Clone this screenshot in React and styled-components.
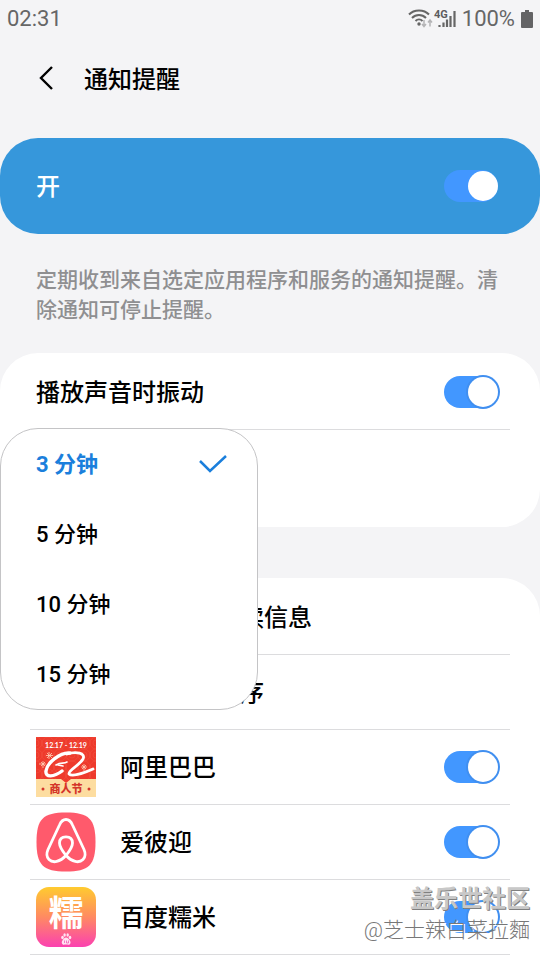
import React, { useState } from 'react'
import styled, { createGlobalStyle } from 'styled-components'

const intervals = ['3 分钟', '5 分钟', '10 分钟', '15 分钟']

function App() {
  const [On, setOn] = useState(true)
  const [Vibrate, setVibrate] = useState(true)
  const [Interval, setInterval] = useState('3 分钟')
  const [Apps, setApps] = useState({ alibaba: true, airbnb: true, nuomi: true })

  const appList = [
    { id: 'alibaba', name: '阿里巴巴', icon: <AlibabaIcon /> },
    { id: 'airbnb', name: '爱彼迎', icon: <AirbnbIcon /> },
    { id: 'nuomi', name: '百度糯米', icon: <NuomiIcon /> }
  ]

  const onAppToggle = (id) => {
    setApps({ ...Apps, [id]: !Apps[id] })
  }

  return (
    <>
      <GlobalStyle />
      <Page>
        <StatusBar>
          <span>02:31</span>
          <StatusIcons>
            <SignalIcon />
            <span>100%</span>
            <BatteryIcon />
          </StatusIcons>
        </StatusBar>

        <Header>
          <BackButton type="button" aria-label="返回">
            <svg width="18" height="28" viewBox="0 0 18 28" fill="none">
              <path d="M16 3 L5 14 L16 25" stroke="#000" strokeWidth="2.4" />
            </svg>
          </BackButton>
          <Title>通知提醒</Title>
        </Header>

        <MainSwitch>
          <MainLabel>开</MainLabel>
          <Switch
            type="checkbox"
            $plain
            checked={On}
            onChange={() => setOn(!On)}
          />
        </MainSwitch>

        <Description>
          定期收到来自选定应用程序和服务的通知提醒。清除通知可停止提醒。
        </Description>

        <Card>
          <Row as="label">
            <RowLabel>播放声音时振动</RowLabel>
            <Switch
              type="checkbox"
              checked={Vibrate}
              onChange={() => setVibrate(!Vibrate)}
            />
          </Row>
          <IntervalArea>
            <Menu role="listbox" aria-label="提醒间隔">
              {intervals.map((item) => (
                <MenuItem
                  key={item}
                  type="button"
                  role="option"
                  aria-selected={item === Interval}
                  $selected={item === Interval}
                  onClick={() => setInterval(item)}
                >
                  <MenuText>{item}</MenuText>
                  {item === Interval && <CheckIcon />}
                </MenuItem>
              ))}
            </Menu>
          </IntervalArea>
        </Card>

        <AppsCard>
          <Row>
            <RowLabel>未接来电提醒 和 未读信息</RowLabel>
          </Row>
          <Row>
            <RowLabel>选择 已安装 应用程序</RowLabel>
          </Row>
          {appList.map((app) => (
            <Row as="label" key={app.id}>
              {app.icon}
              <RowLabel>{app.name}</RowLabel>
              <Switch
                type="checkbox"
                checked={Apps[app.id]}
                onChange={() => onAppToggle(app.id)}
              />
            </Row>
          ))}
        </AppsCard>

        <Watermark>
          <WatermarkName>盖乐世社区</WatermarkName>
          <WatermarkUser>@芝士辣白菜拉麵</WatermarkUser>
        </Watermark>
      </Page>
    </>
  )
}

export default App

function SignalIcon() {
  return (
    <svg width="48" height="22" viewBox="0 0 48 22" fill="none">
      {/* wifi */}
      <g stroke="#666" strokeWidth="2">
        <path d="M1 6.5 C6 1 16 1 21 6.5" />
        <path d="M4 10 C8 6 14 6 18 10" />
        <path d="M7.500 13 C9.500 11 12.500 11 14.500 13" />
      </g>
      <circle cx="11" cy="16" r="1.700" fill="#666" />
      <path
        d="M16 12 V18 M14 16 L16 18.500 L18 16 M22 18.500 V12.500 M20 14.500 L22 12 L24 14.500"
        stroke="#b4b4b6"
        strokeWidth="1.500"
      />
      {/* mobile signal */}
      <path
        d="M31.500 19 V17 M35.500 19 V14.500 M39 19 V11.500 M42.500 19 V8 M46.500 19 V3"
        stroke="#666"
        strokeWidth="2.200"
      />
      <text
        x="26"
        y="10"
        fontFamily="Roboto, sans-serif"
        fontSize="11"
        fontWeight="700"
        fill="#5c5c5e"
      >
        4G
      </text>
    </svg>
  )
}

function BatteryIcon() {
  return (
    <svg width="12" height="18" viewBox="0 0 12 18">
      <path d="M4 0 H8 V2 H11 Q12 2 12 3 V17 Q12 18 11 18 H1 Q0 18 0 17 V3 Q0 2 1 2 H4 Z" fill="#636365" />
    </svg>
  )
}

function CheckIcon() {
  return (
    <svg width="28" height="20" viewBox="0 0 28 20" fill="none">
      <path d="M1 7 L11 17 L27 2" stroke="#1b7fdc" strokeWidth="2.500" />
    </svg>
  )
}

function AlibabaIcon() {
  return (
    <AppIcon viewBox="0 0 60 60">
      <rect width="60" height="60" fill="#ee3a2c" />
      <g fill="none" stroke="#f2503f" strokeWidth="0.600">
        {[0, 12, 24, 36, 48, 60].map((x) => (
          <React.Fragment key={x}>
            <circle cx={x} cy="6" r="6" />
            <circle cx={x} cy="6" r="3" />
            <circle cx={x} cy="18" r="6" />
            <circle cx={x} cy="18" r="3" />
            <circle cx={x} cy="30" r="6" />
            <circle cx={x} cy="38" r="6" />
          </React.Fragment>
        ))}
      </g>
      <path d="M0 42 H25 L30 46 L35 42 H60 V60 H0 Z" fill="#fddda0" />
      <text
        x="30"
        y="11"
        textAnchor="middle"
        fontFamily="Lato, sans-serif"
        fontSize="7"
        fontWeight="700"
        fill="#fff"
      >
        12.17 - 12.19
      </text>
      <g fill="none" stroke="#fff" strokeLinecap="round" strokeLinejoin="round">
        <path
          d="M34 16 C24 15 11 26 10 34 C9 41 18 40 26 34"
          strokeWidth="3.400"
        />
        <path d="M20 28 C24 25 28 27 31 25" strokeWidth="1.600" />
        <path d="M22 28 L27 29" strokeWidth="1.600" />
        <path
          d="M31 17 C40 14 50 16 47 22 C43 29 32 33 33 37 C36 40 48 36 57 32"
          strokeWidth="2.800"
        />
      </g>
      <path
        d="M13 15 V22 M10 18.500 H17 M11 16 L16 21 M16 16 L11 21 M7 24 V31 M3 27 H10 M5 25 L9 29 M9 25 L5 29 M48 27 V34 M45 30 H51 M46 28 L50 32 M50 28 L46 32"
        stroke="#ffd0b8"
        strokeWidth="0.800"
      />
      <circle cx="7" cy="52" r="1.500" fill="#d4362a" />
      <circle cx="53" cy="52" r="1.500" fill="#d4362a" />
      <text
        x="30"
        y="56"
        textAnchor="middle"
        fontFamily="'Noto Sans CJK SC', sans-serif"
        fontSize="11"
        fontWeight="900"
        fill="#d4362a"
      >
        商人节
      </text>
    </AppIcon>
  )
}

function AirbnbIcon() {
  return (
    <AppIcon viewBox="0 0 60 60">
      <path
        d="M30 0.500 C53 0.500 59.500 7 59.500 30 C59.500 53 53 59.500 30 59.500 C7 59.500 0.500 53 0.500 30 C0.500 7 7 0.500 30 0.500 Z"
        fill="#ff5a6c"
      />
      <path
        d="M30 43.500 C26 38.500 23.500 34.500 23.500 31 C23.500 27 26 24.800 30 24.800 C34 24.800 36.500 27 36.500 31 C36.500 34.500 34 38.500 30 43.500 C24 50 17 51.500 13 47.500 C10 44.500 10.500 41 12 37.500 L23.500 13 C25 9.500 26.500 7.500 30 7.500 C33.500 7.500 35 9.500 36.500 13 L48 37.500 C49.500 41 50 44.500 47 47.500 C43 51.500 36 50 30 43.500 Z"
        fill="none"
        stroke="#fff"
        strokeWidth="2.800"
        strokeLinejoin="round"
      />
    </AppIcon>
  )
}

function NuomiIcon() {
  return (
    <AppIcon viewBox="0 0 60 60">
      <defs>
        <linearGradient id="nuomi" x1="0" y1="0" x2="0" y2="1">
          <stop offset="0" stopColor="#ffcb2f" />
          <stop offset="0.500" stopColor="#ff8a62" />
          <stop offset="1" stopColor="#fb41b0" />
        </linearGradient>
      </defs>
      <rect width="60" height="60" rx="13" fill="url(#nuomi)" />
      <text
        x="30"
        y="39"
        textAnchor="middle"
        fontFamily="'Noto Sans CJK SC', sans-serif"
        fontSize="35"
        fontWeight="700"
        fill="#fff"
      >
        糯
      </text>
      {/* paw */}
      <g fill="#ffe3f2">
        <ellipse cx="26.500" cy="50.500" rx="1.300" ry="1.800" />
        <ellipse cx="28.600" cy="48" rx="1.200" ry="1.700" />
        <ellipse cx="31.700" cy="48" rx="1.200" ry="1.700" />
        <ellipse cx="34" cy="50.500" rx="1.300" ry="1.800" />
        <path d="M30 50.500 C32 50.500 35 54 34.500 56 C34 58.500 32 57.500 30 57.500 C28 57.500 26.500 58.500 25.800 56 C25.500 54 28 50.500 30 50.500 Z" />
      </g>
      <path
        d="M28.500 53.500 V56 M30.500 53.500 V56 H32.500 V53.500"
        stroke="#f04bb0"
        strokeWidth="0.700"
        fill="none"
      />
    </AppIcon>
  )
}

const GlobalStyle = createGlobalStyle`
  body {
    margin: 0;
    background-color: #f4f4f6;
    color: #000;
    font-family: Roboto, 'Noto Sans CJK SC', sans-serif;
  }
  * {
    box-sizing: border-box;
  }
`
const Page = styled.main`
  position: relative;
  display: flex;
  flex-direction: column;
  min-height: 100vh;
`
const StatusBar = styled.div`
  display: flex;
  align-items: center;
  justify-content: space-between;
  height: 38px;
  padding: 0 7px;
  color: #666;
  font-size: 22px;
  line-height: 24px;
`
const StatusIcons = styled.div`
  display: flex;
  align-items: center;
  gap: 6px;
`
const Header = styled.header`
  display: flex;
  align-items: center;
  height: 80px;
  margin-bottom: 20px;
  padding: 0 36px;
  gap: 30px;
`
const BackButton = styled.button`
  display: flex;
  padding: 0;
  border: none;
  background: none;
  cursor: pointer;
`
const Title = styled.h1`
  margin: 0;
  padding-top: 4px;
  font-size: 24px;
  font-weight: 500;
  line-height: 32px;
`
const MainSwitch = styled.label`
  display: flex;
  align-items: center;
  justify-content: space-between;
  height: 96px;
  padding: 0 42px 0 36px;
  border-radius: 38px;
  background-color: #3697db;
  color: #fff;
  font-size: 24px;
  font-weight: 500;
`
const MainLabel = styled.span`
  padding-bottom: 4px;
`
const Switch = styled.input`
  appearance: none;
  display: flex;
  align-items: center;
  justify-content: flex-start;
  flex: none;
  width: 54px;
  height: 32px;
  margin: 0;
  border-radius: 16px;
  background-color: #bbb;
  cursor: pointer;

  &::before {
    content: '';
    width: 30px;
    height: 30px;
    border-radius: 50%;
    background-color: #fff;
    box-shadow: ${(props) => (props.$plain ? 'none' : '0 0 0 2px #bbb')};
  }
  &:checked {
    justify-content: flex-end;
    background-color: #4297ff;
  }
  &:checked::before {
    box-shadow: ${(props) => (props.$plain ? 'none' : '0 0 0 2px #408ff0')};
  }
`
const Description = styled.p`
  margin: 0;
  padding: 31px 36px 28px;
  color: #8f8f91;
  font-size: 21px;
  font-weight: 500;
  line-height: 30px;
`
const Card = styled.section`
  padding-top: 2px;
  border-radius: 38px;
  background-color: #fff;
`
const AppsCard = styled(Card)`
  flex: 1;
  margin-top: 51px;
  border-radius: 38px 38px 0 0;
`
const Row = styled.div`
  display: flex;
  align-items: center;
  min-height: 75px;
  margin: 0 30px;
  padding: 0 12px 0 6px;
  gap: 24px;
  border-bottom: 1px solid #dcdcde;
`
const RowLabel = styled.span`
  flex: 1;
  padding-top: 2px;
  font-size: 24px;
  font-weight: 500;
  line-height: 32px;
`
const IntervalArea = styled.div`
  position: relative;
  height: 97px;
`
const Menu = styled.div`
  position: absolute;
  z-index: 1;
  top: -2px;
  left: 0;
  width: 258px;
  overflow: hidden;
  border: 1px solid #c4c4c6;
  border-radius: 38px;
  background-color: #fff;
`
const MenuItem = styled.button`
  display: flex;
  align-items: center;
  justify-content: space-between;
  width: 100%;
  height: 70px;
  padding: 0 30px 0 35px;
  border: none;
  background: none;
  color: ${(props) => (props.$selected ? '#1b7fdc' : '#000')};
  font-family: inherit;
  font-size: 22px;
  font-weight: ${(props) => (props.$selected ? 700 : 500)};
  cursor: pointer;
`
const MenuText = styled.span`
  padding-bottom: 4px;
`
const AppIcon = styled.svg`
  flex: none;
  width: 60px;
  height: 60px;
`
const Watermark = styled.div`
  position: absolute;
  z-index: 2;
  right: 10px;
  bottom: 15px;
  text-align: right;
  pointer-events: none;
`
const WatermarkName = styled.div`
  color: #c8c8c8;
  font-size: 24px;
  font-weight: 700;
  line-height: 32px;
  text-shadow: 1px 1px 0 #808080;
`
const WatermarkUser = styled.div`
  color: #777;
  font-size: 21px;
  font-weight: 300;
  line-height: 30px;
  text-shadow: 1px 1px 0 #fff;
`
